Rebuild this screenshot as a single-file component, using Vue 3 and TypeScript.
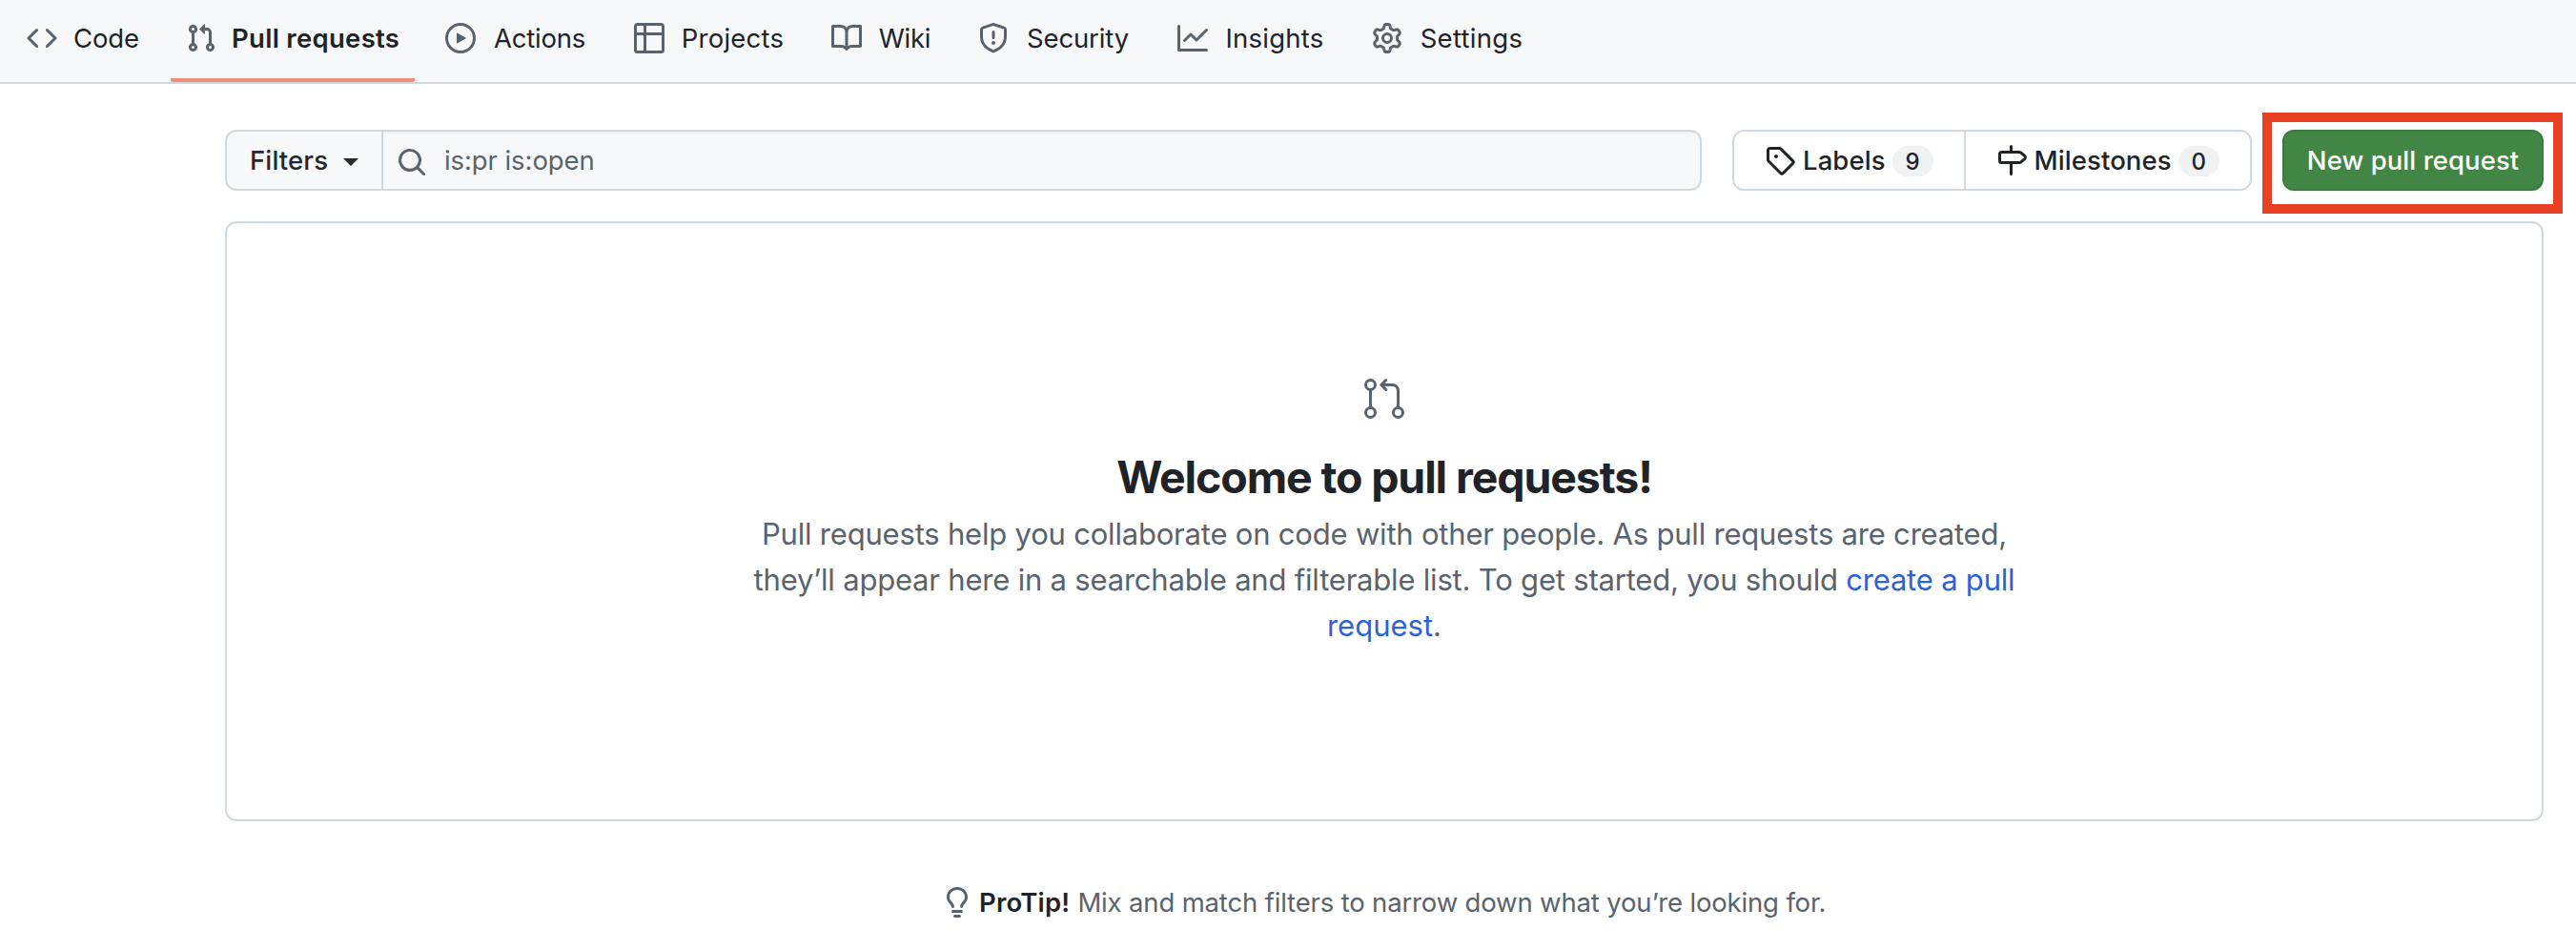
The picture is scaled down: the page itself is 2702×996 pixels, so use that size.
<script setup lang="ts">
interface Tab {
  label: string
  icon: string
  key: string
  active?: boolean
}

const tabs: Tab[] = [
  {
    key: 'code',
    label: 'Code',
    icon: 'm11.28 3.22 4.25 4.25a.75.75 0 0 1 0 1.06l-4.25 4.25a.749.749 0 0 1-1.275-.326.749.749 0 0 1 .215-.734L13.94 8l-3.72-3.72a.749.749 0 0 1 .326-1.275.749.749 0 0 1 .734.215Zm-6.56 0a.751.751 0 0 1 1.042.018.751.751 0 0 1 .018 1.042L2.06 8l3.72 3.72a.749.749 0 0 1-.326 1.275.749.749 0 0 1-.734-.215L.47 8.53a.75.75 0 0 1 0-1.06Z',
  },
  {
    key: 'pulls',
    label: 'Pull requests',
    active: true,
    icon: 'M1.5 3.25a2.25 2.25 0 1 1 3 2.122v5.256a2.251 2.251 0 1 1-1.5 0V5.372A2.25 2.25 0 0 1 1.5 3.25Zm5.677-.177L9.573.677A.25.25 0 0 1 10 .854V2.5h1A2.5 2.5 0 0 1 13.5 5v5.628a2.251 2.251 0 1 1-1.5 0V5a1 1 0 0 0-1-1h-1v1.646a.25.25 0 0 1-.427.177L7.177 3.427a.25.25 0 0 1 0-.354ZM3.75 2.5a.75.75 0 1 0 0 1.5.75.75 0 0 0 0-1.5Zm0 9.5a.75.75 0 1 0 0 1.5.75.75 0 0 0 0-1.5Zm8.25.75a.75.75 0 1 0 1.5 0 .75.75 0 0 0-1.5 0Z',
  },
  {
    key: 'actions',
    label: 'Actions',
    icon: 'M8 0a8 8 0 1 1 0 16A8 8 0 0 1 8 0ZM1.5 8a6.5 6.5 0 1 0 13 0 6.5 6.5 0 0 0-13 0Zm4.879-2.773 4.264 2.559a.25.25 0 0 1 0 .428l-4.264 2.559A.25.25 0 0 1 6 10.559V5.442a.25.25 0 0 1 .379-.215Z',
  },
  {
    key: 'projects',
    label: 'Projects',
    icon: 'M0 1.75C0 .784.784 0 1.75 0h12.5C15.216 0 16 .784 16 1.75v12.5A1.75 1.75 0 0 1 14.25 16H1.75A1.75 1.75 0 0 1 0 14.25ZM6.5 6.5v8h7.75a.25.25 0 0 0 .25-.25V6.5Zm8-1.5V1.75a.25.25 0 0 0-.25-.25H6.5V5Zm-13 1.5v7.75c0 .138.112.25.25.25H5v-8ZM5 5V1.5H1.75a.25.25 0 0 0-.25.25V5Z',
  },
  {
    key: 'wiki',
    label: 'Wiki',
    icon: 'M0 1.75A.75.75 0 0 1 .75 1h4.253c1.227 0 2.317.59 3 1.501A3.743 3.743 0 0 1 11.006 1h4.245a.75.75 0 0 1 .75.75v10.5a.75.75 0 0 1-.75.75h-4.507a2.25 2.25 0 0 0-1.591.659l-.622.621a.75.75 0 0 1-1.06 0l-.622-.621A2.25 2.25 0 0 0 5.258 13H.75a.75.75 0 0 1-.75-.75Zm7.251 10.324.004-5.073-.002-2.253A2.25 2.25 0 0 0 5.003 2.5H1.5v9h3.757a3.75 3.75 0 0 1 1.994.574ZM8.755 4.75l-.004 7.322a3.752 3.752 0 0 1 1.992-.572H14.5v-9h-3.495a2.25 2.25 0 0 0-2.25 2.25Z',
  },
  {
    key: 'security',
    label: 'Security',
    icon: 'M7.467.133a1.748 1.748 0 0 1 1.066 0l5.25 1.68A1.75 1.75 0 0 1 15 3.48V7c0 1.566-.32 3.182-1.303 4.682-.983 1.498-2.585 2.813-5.032 3.855a1.697 1.697 0 0 1-1.33 0c-2.447-1.042-4.049-2.357-5.032-3.855C1.32 10.182 1 8.566 1 7V3.48a1.75 1.75 0 0 1 1.217-1.667Zm.61 1.429a.25.25 0 0 0-.153 0l-5.25 1.68a.25.25 0 0 0-.174.238V7c0 1.358.275 2.666 1.057 3.86.784 1.194 2.121 2.34 4.366 3.297a.196.196 0 0 0 .154 0c2.245-.956 3.582-2.104 4.366-3.298C13.225 9.666 13.5 8.36 13.5 7V3.48a.251.251 0 0 0-.174-.237l-5.25-1.68ZM8.75 4.75v3a.75.75 0 0 1-1.5 0v-3a.75.75 0 0 1 1.5 0ZM9 10.5a1 1 0 1 1-2 0 1 1 0 0 1 2 0Z',
  },
  {
    key: 'insights',
    label: 'Insights',
    icon: 'M1.5 1.75V13.5h13.75a.75.75 0 0 1 0 1.5H.75a.75.75 0 0 1-.75-.75V1.75a.75.75 0 0 1 1.5 0Zm14.28 2.53-5.25 5.25a.75.75 0 0 1-1.06 0L7 7.06 4.28 9.78a.751.751 0 0 1-1.042-.018.751.751 0 0 1-.018-1.042l3.25-3.25a.75.75 0 0 1 1.06 0L10 7.94l4.72-4.72a.751.751 0 0 1 1.042.018.751.751 0 0 1 .018 1.042Z',
  },
  {
    key: 'settings',
    label: 'Settings',
    icon: 'M8 0a8.2 8.2 0 0 1 .701.031C9.444.095 9.99.645 10.16 1.29l.288 1.107c.018.066.079.158.212.224.231.114.454.243.668.386.123.082.233.09.299.071l1.103-.303c.644-.176 1.392.021 1.82.63.27.385.506.792.704 1.218.315.675.111 1.422-.364 1.891l-.814.806c-.049.048-.098.147-.088.294.016.257.016.515 0 .772-.01.147.038.246.088.294l.814.806c.475.469.679 1.216.364 1.891a7.977 7.977 0 0 1-.704 1.217c-.428.61-1.176.807-1.82.63l-1.102-.302c-.067-.019-.177-.011-.3.071a5.909 5.909 0 0 1-.668.386c-.133.066-.194.158-.211.224l-.29 1.106c-.168.646-.715 1.196-1.458 1.26a8.006 8.006 0 0 1-1.402 0c-.743-.064-1.289-.614-1.458-1.26l-.289-1.106c-.018-.066-.079-.158-.212-.224a5.738 5.738 0 0 1-.668-.386c-.123-.082-.233-.09-.299-.071l-1.103.303c-.644.176-1.392-.021-1.82-.63a8.12 8.12 0 0 1-.704-1.218c-.315-.675-.111-1.422.363-1.891l.815-.806c.05-.048.098-.147.088-.294a6.214 6.214 0 0 1 0-.772c.01-.147-.038-.246-.088-.294l-.815-.806C.635 6.045.431 5.298.746 4.623a7.92 7.92 0 0 1 .704-1.217c.428-.61 1.176-.807 1.82-.63l1.102.302c.067.019.177.011.3-.071.214-.143.437-.272.668-.386.133-.066.194-.158.211-.224l.29-1.106C6.009.645 6.556.095 7.299.03 7.53.01 7.764 0 8 0Zm-.571 1.525c-.036.003-.108.036-.137.146l-.289 1.105c-.147.561-.549.967-.998 1.189-.173.086-.34.183-.5.29-.417.278-.97.423-1.529.27l-1.103-.303c-.109-.03-.175.016-.195.045-.22.312-.412.644-.573.99-.014.031-.021.11.059.19l.815.806c.411.406.562.957.53 1.456a4.709 4.709 0 0 0 0 .582c.032.499-.119 1.05-.53 1.456l-.815.806c-.081.08-.073.159-.059.19.162.346.353.677.573.989.02.03.085.076.195.046l1.102-.303c.56-.153 1.113-.008 1.53.27.161.107.328.204.501.29.447.222.85.629.997 1.189l.289 1.105c.029.109.101.143.137.146a6.6 6.6 0 0 0 1.142 0c.036-.003.108-.036.137-.146l.289-1.105c.147-.561.549-.967.998-1.189.173-.086.34-.183.5-.29.417-.278.97-.423 1.529-.27l1.103.303c.109.029.175-.016.195-.045.22-.313.411-.644.573-.99.014-.031.021-.11-.059-.19l-.815-.806c-.411-.406-.562-.957-.53-1.456a4.709 4.709 0 0 0 0-.582c-.032-.499.119-1.05.53-1.456l.815-.806c.081-.08.073-.159.059-.19a6.464 6.464 0 0 0-.573-.989c-.02-.03-.085-.076-.195-.046l-1.102.303c-.56.153-1.113.008-1.53-.27a4.44 4.44 0 0 0-.501-.29c-.447-.222-.85-.629-.997-1.189l-.289-1.105c-.029-.11-.101-.143-.137-.146a6.6 6.6 0 0 0-1.142 0ZM11 8a3 3 0 1 1-6 0 3 3 0 0 1 6 0ZM9.5 8a1.5 1.5 0 1 0-3.001.001A1.5 1.5 0 0 0 9.5 8Z',
  },
]

const searchIcon =
  'M10.68 11.74a6 6 0 0 1-7.922-8.982 6 6 0 0 1 8.982 7.922l3.04 3.04a.749.749 0 0 1-.326 1.275.749.749 0 0 1-.734-.215ZM11.5 7a4.499 4.499 0 1 0-8.997 0A4.499 4.499 0 0 0 11.5 7Z'

const links = [
  {
    key: 'labels',
    label: 'Labels',
    count: 9,
    icon: 'M1 7.775V2.75C1 1.784 1.784 1 2.75 1h5.025c.464 0 .91.184 1.238.513l6.25 6.25a1.75 1.75 0 0 1 0 2.474l-5.026 5.026a1.75 1.75 0 0 1-2.474 0l-6.25-6.25A1.752 1.752 0 0 1 1 7.775Zm1.5 0c0 .066.026.13.073.177l6.25 6.25a.25.25 0 0 0 .354 0l5.025-5.025a.25.25 0 0 0 0-.354l-6.25-6.25a.25.25 0 0 0-.177-.073H2.75a.25.25 0 0 0-.25.25ZM6 5a1 1 0 1 1 0 2 1 1 0 0 1 0-2Z',
  },
  {
    key: 'milestones',
    label: 'Milestones',
    count: 0,
    icon: 'M7.75 0a.75.75 0 0 1 .75.75V3h3.634c.414 0 .814.147 1.13.414l2.07 1.75a1.75 1.75 0 0 1 0 2.672l-2.07 1.75a1.75 1.75 0 0 1-1.13.414H8.5v5.25a.75.75 0 0 1-1.5 0V10H2.75A1.75 1.75 0 0 1 1 8.25v-3.5C1 3.784 1.784 3 2.75 3H7V.75A.75.75 0 0 1 7.75 0Zm4.384 8.5a.25.25 0 0 0 .161-.06l2.07-1.75a.248.248 0 0 0 0-.38l-2.07-1.75a.25.25 0 0 0-.161-.06H2.75a.25.25 0 0 0-.25.25v3.5c0 .138.112.25.25.25h9.384Z',
  },
]

const pullIcon =
  'M16 19.25a3.25 3.25 0 1 1 6.5 0 3.25 3.25 0 0 1-6.5 0Zm-14.5 0a3.25 3.25 0 1 1 6.5 0 3.25 3.25 0 0 1-6.5 0Zm0-14.5a3.25 3.25 0 1 1 6.5 0 3.25 3.25 0 0 1-6.5 0ZM4.75 3a1.75 1.75 0 1 0 .001 3.501A1.75 1.75 0 0 0 4.75 3Zm0 14.5a1.75 1.75 0 1 0 .001 3.501A1.75 1.75 0 0 0 4.75 17.5Zm14.5 0a1.75 1.75 0 1 0 .001 3.501 1.75 1.75 0 0 0-.001-3.501Z'
const pullArrow =
  'M13.405 1.72a.75.75 0 0 1 0 1.06L12.185 4h4.065A3.75 3.75 0 0 1 20 7.75v8.75a.75.75 0 0 1-1.5 0V7.75a2.25 2.25 0 0 0-2.25-2.25h-4.064l1.22 1.22a.75.75 0 0 1-1.061 1.06l-2.5-2.5a.75.75 0 0 1 0-1.06l2.5-2.5a.75.75 0 0 1 1.06 0ZM4.75 7.25A.75.75 0 0 1 5.5 8v8A.75.75 0 0 1 4 16V8a.75.75 0 0 1 .75-.75Z'

const bulbIcon =
  'M8 1.5c-2.363 0-4 1.69-4 3.75 0 .984.424 1.625.984 2.304l.214.253c.223.264.47.556.673.848.284.411.537.896.621 1.49a.75.75 0 0 1-1.484.211c-.04-.282-.163-.547-.37-.847a8.456 8.456 0 0 0-.542-.68c-.084-.1-.173-.205-.268-.32C3.201 7.75 2.5 6.766 2.5 5.25 2.5 2.31 4.863 0 8 0s5.5 2.31 5.5 5.25c0 1.516-.701 2.5-1.328 3.259-.095.115-.184.22-.268.319-.207.245-.383.453-.541.681-.208.3-.33.565-.37.847a.751.751 0 0 1-1.485-.212c.084-.593.337-1.078.621-1.489.203-.292.45-.584.673-.848.075-.088.147-.173.213-.253.561-.679.985-1.32.985-2.304 0-2.06-1.637-3.75-4-3.75ZM5.75 12h4.5a.75.75 0 0 1 0 1.5h-4.5a.75.75 0 0 1 0-1.5ZM6 15.25a.75.75 0 0 1 .75-.75h2.5a.75.75 0 0 1 0 1.5h-2.5a.75.75 0 0 1-.75-.75Z'
</script>

<template>
  <div class="page">
    <nav class="nav">
      <a v-for="tab in tabs" :key="tab.key" class="tab" :class="{ active: tab.active }">
        <svg class="icon" viewBox="0 0 16 16"><path :d="tab.icon" /></svg>
        <span class="tab-label" :class="tab.key">{{ tab.label }}</span>
      </a>
    </nav>

    <main class="main">
      <div class="toolbar">
        <div class="search">
          <button class="filters" type="button">
            <span>Filters</span>
            <span class="caret"></span>
          </button>
          <div class="query">
            <svg class="icon search-icon" viewBox="0 0 16 16"><path :d="searchIcon" /></svg>
            <span>is:pr is:open</span>
          </div>
        </div>

        <div class="links">
          <a v-for="link in links" :key="link.key" class="link">
            <svg class="icon" viewBox="0 0 16 16"><path :d="link.icon" /></svg>
            <span class="link-label">{{ link.label }}</span>
            <span class="count">{{ link.count }}</span>
          </a>
        </div>

        <div class="new">
          <button class="new-button" type="button">New pull request</button>
          <div class="highlight"></div>
        </div>
      </div>

      <section class="blank">
        <svg class="blank-icon" viewBox="0 0 24 24">
          <path :d="pullIcon" />
          <path :d="pullArrow" />
        </svg>
        <h3>Welcome to pull requests!</h3>
        <p>
          Pull requests help you collaborate on code with other people. As pull requests are created,<br />
          they’ll appear here in a searchable and filterable list. To get started, you should
          <a>create a pull<br /><span class="tail">request</span></a><span class="tail">.</span>
        </p>
      </section>

      <footer class="protip">
        <svg class="icon" viewBox="0 0 16 16"><path :d="bulbIcon" /></svg>
        <strong>ProTip!</strong>
        <span>Mix and match filters to narrow down what you’re looking for.</span>
      </footer>
    </main>
  </div>
</template>

<style>
body {
  margin: 0;
  background: #fff;
}
</style>

<style scoped>
.page {
  box-sizing: border-box;
  width: 2702px;
  height: 996px;
  overflow: hidden;
  background: #fff;
  color: #1f2328;
  font-family: Inter, 'Liberation Sans', sans-serif;
  font-size: 27.5px;
  line-height: 40px;
}

.icon {
  display: block;
  flex: none;
  width: 32px;
  height: 32px;
  fill: currentColor;
}

.nav {
  box-sizing: border-box;
  display: flex;
  gap: 16px;
  height: 88px;
  padding: 0 12px;
  background: #f6f8fa;
  border-bottom: 2px solid #d1d9e0;
}

.tab {
  box-sizing: border-box;
  display: flex;
  align-items: center;
  gap: 16px;
  height: 86px;
  padding: 0 16px 6px;
}

.tab .icon {
  color: #59636e;
}

.tab.active {
  padding-bottom: 2px;
  border-bottom: 4px solid #ef8f79;
  border-radius: 0 0 2px 2px;
  font-weight: 600;
}

.tab-label {
  text-align: center;
  white-space: nowrap;
}

.code { width: 71px; letter-spacing: -0.1px; }
.pulls { width: 176px; letter-spacing: 0.29px; }
.actions { width: 102px; letter-spacing: -0.26px; }
.projects { width: 111px; letter-spacing: 0.22px; }
.wiki { width: 58px; letter-spacing: -0.25px; }
.security { width: 113px; letter-spacing: -0.14px; }
.insights { width: 108px; letter-spacing: 0.22px; }
.settings { width: 113px; letter-spacing: 0.3px; }

.main {
  padding: 48px 34px 0 236px;
}

.toolbar {
  display: flex;
  height: 64px;
}

.search {
  box-sizing: border-box;
  display: flex;
  width: 1549px;
  margin-right: 32px;
  overflow: hidden;
  background: #f6f8fa;
  border: 2px solid #d1d9e0;
  border-radius: 12px;
}

.filters {
  box-sizing: border-box;
  display: flex;
  align-items: center;
  width: 164px;
  padding: 0 0 0 24px;
  background: transparent;
  border: 0;
  border-right: 2px solid #d1d9e0;
  color: #25292e;
  font: inherit;
  font-weight: 500;
  letter-spacing: 0.13px;
}

.caret {
  width: 0;
  height: 0;
  margin: 4px 0 0 16px;
  border: 8px solid transparent;
  border-top-color: currentColor;
  border-bottom: 0;
}

.query {
  display: flex;
  flex: 1;
  align-items: center;
  gap: 18px;
  padding-left: 14px;
  box-shadow: inset 0 2px 0 rgba(31, 35, 40, 0.04);
  color: #59636e;
  letter-spacing: -0.08px;
}

.search-icon {
  margin-top: 4px;
}

.links {
  box-sizing: border-box;
  display: flex;
  width: 545px;
  margin-right: 32px;
  border: 2px solid #d1d9e0;
  border-radius: 12px;
}

.link {
  display: flex;
  align-items: center;
  padding: 0 32px;
  font-weight: 500;
}

.link + .link {
  border-left: 2px solid #d1d9e0;
}

.link-label {
  margin: 0 7px 0 8px;
  letter-spacing: 0.09px;
}

.count {
  box-sizing: border-box;
  width: 43px;
  height: 32px;
  margin-top: 2px;
  border-radius: 16px;
  background: #eff1f3;
  font-size: 24px;
  line-height: 33px;
  text-align: center;
}

.new {
  position: relative;
}

.new-button {
  box-sizing: border-box;
  display: block;
  width: 274px;
  height: 64px;
  padding: 0;
  background: #428646;
  border: 2px solid #3c7a41;
  border-radius: 12px;
  box-shadow: 0 2px 0 rgba(31, 35, 40, 0.04);
  color: #fff;
  font: inherit;
  font-weight: 500;
  letter-spacing: 0.06px;
}

.highlight {
  position: absolute;
  top: -18px;
  left: -21px;
  box-sizing: border-box;
  width: 315px;
  height: 106px;
  border: 10px solid #ea4025;
  pointer-events: none;
}

.blank {
  box-sizing: border-box;
  display: flex;
  flex-direction: column;
  align-items: center;
  height: 629px;
  margin-top: 32px;
  padding-top: 160px;
  border: 2px solid #d1d9e0;
  border-radius: 12px;
}

.blank-icon {
  width: 48px;
  height: 48px;
  fill: #59636e;
}

.blank h3 {
  margin: 22px 0 0;
  font-size: 46.5px;
  font-weight: 700;
  line-height: 72px;
  letter-spacing: -1.13px;
}

.blank p {
  margin: 0;
  color: #59636e;
  font-size: 31px;
  line-height: 48px;
  letter-spacing: -0.2px;
  text-align: center;
  white-space: nowrap;
}

.blank a {
  color: #2b63d6;
}

.tail {
  letter-spacing: 0;
}

.protip {
  display: flex;
  align-items: center;
  margin: 65px 0 0 752px;
  color: #59636e;
  letter-spacing: -0.16px;
  white-space: nowrap;
}

.protip strong {
  margin: 0 8px 0 7px;
  color: #1f2328;
  font-weight: 600;
  letter-spacing: 0.2px;
}
</style>
